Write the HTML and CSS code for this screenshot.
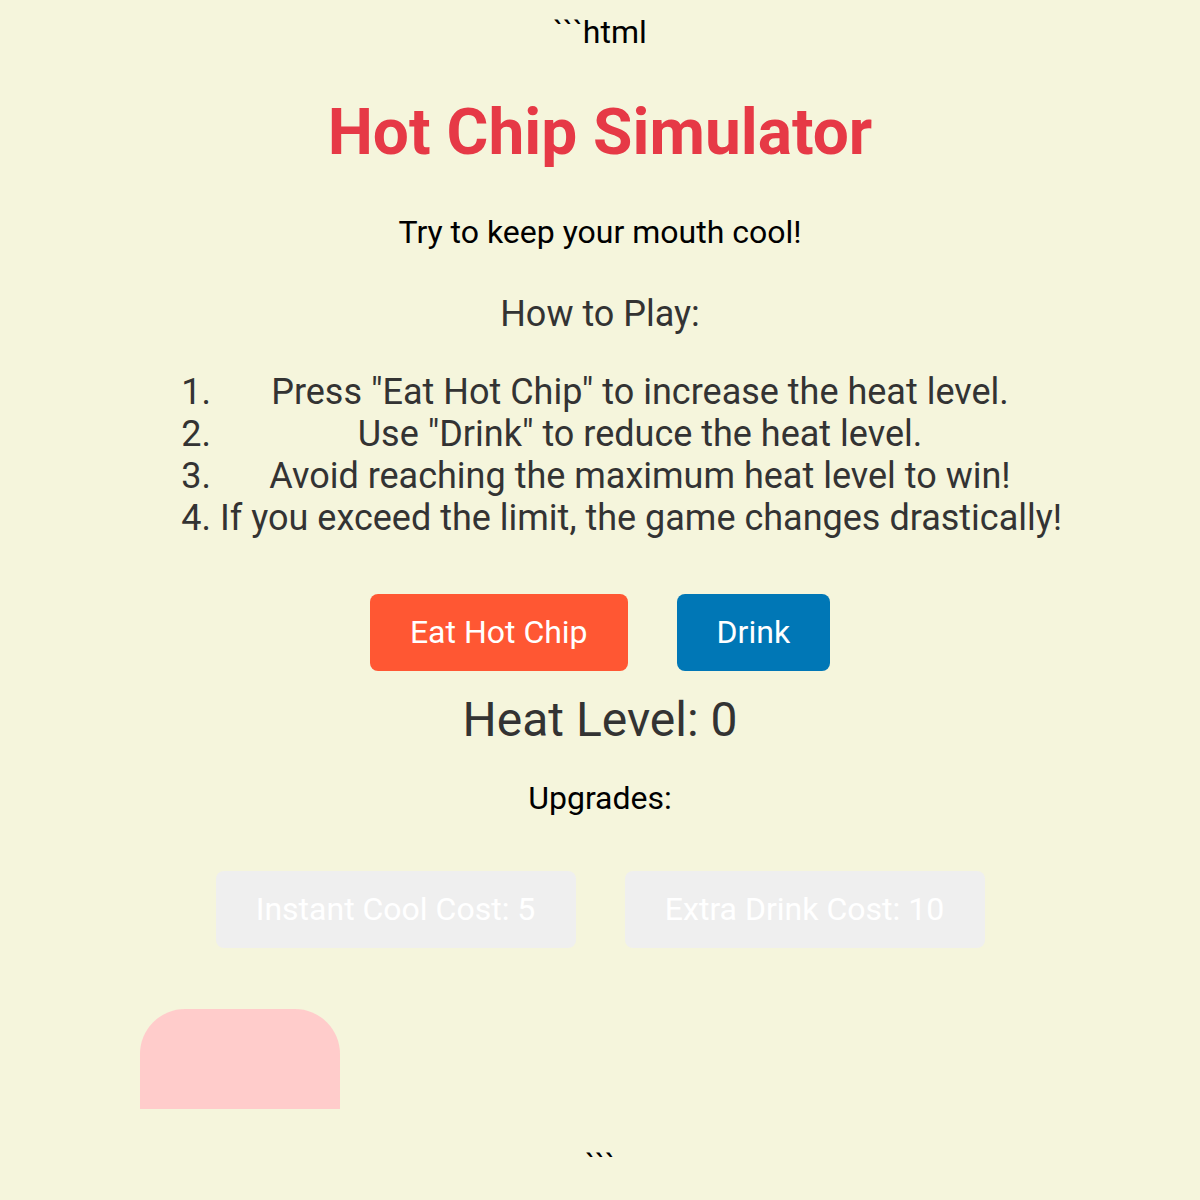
FILE: index.html
```html
<!DOCTYPE html>
<html>
<head>
<meta charset="utf-8">
<title>Hot Chip Simulator</title>
<link rel="stylesheet" href="styles.css">
</head>
<body>
<div class="fence fence-top">```html</div>
<main class="game">
  <h1 class="title">Hot Chip Simulator</h1>
  <p class="subtitle">Try to keep your mouth cool!</p>
  <h2 class="howto">How to Play:</h2>
  <ol class="rules">
    <li>Press "Eat Hot Chip" to increase the heat level.</li>
    <li>Use "Drink" to reduce the heat level.</li>
    <li>Avoid reaching the maximum heat level to win!</li>
    <li>If you exceed the limit, the game changes drastically!</li>
  </ol>
  <div class="actions">
    <button class="btn btn-eat">Eat Hot Chip</button>
    <button class="btn btn-drink">Drink</button>
  </div>
  <div class="heat">Heat Level: 0</div>
  <div class="upgrades-label">Upgrades:</div>
  <div class="upgrades">
    <button class="btn btn-upgrade" disabled>Instant Cool Cost: 5</button>
    <button class="btn btn-upgrade" disabled>Extra Drink Cost: 10</button>
  </div>
  <div class="mouth"></div>
</main>
<div class="fence fence-bottom">```</div>
</body>
</html>
```

FILE: styles.css
```css
html, body {
  margin: 0;
  padding: 0;
}

body {
  background: #f5f5dc;
  font-family: Roboto, "Liberation Sans", sans-serif;
  color: #000;
  text-align: center;
}

.fence {
  font-size: 32px;
  line-height: 37px;
  color: #000;
}

.fence-top {
  padding-top: 14px;
}

.fence-bottom {
  margin-top: 38px;
  padding-bottom: 20px;
}

.game {
  width: 920px;
  margin: 0 auto;
  display: flex;
  flex-direction: column;
  align-items: center;
}

.title {
  margin: 44px 0 0;
  font-size: 64px;
  line-height: 75px;
  font-weight: 700;
  color: #e63946;
}

.subtitle {
  margin: 44px 0 0;
  font-size: 32px;
  line-height: 37px;
  color: #000;
}

.howto {
  margin: 42px 0 0;
  font-size: 36px;
  line-height: 42px;
  font-weight: 400;
  color: #333;
}

.rules {
  align-self: stretch;
  margin: 36px 0 0;
  padding: 0 0 0 80px;
  font-size: 36px;
  line-height: 42px;
  color: #333;
  text-align: center;
}

.rules li {
  white-space: nowrap;
}

.actions,
.upgrades {
  display: flex;
  justify-content: center;
  gap: 49px;
}

.actions {
  margin-top: 55px;
}

.btn {
  font-family: Roboto, "Liberation Sans", sans-serif;
  font-size: 32px;
  line-height: 37px;
  padding: 20px 40px;
  border: none;
  border-radius: 8px;
  color: #fff;
}

.btn-eat {
  background: #ff5733;
}

.btn-drink {
  background: #0077b6;
}

.heat {
  margin-top: 21px;
  font-size: 48px;
  line-height: 56px;
  color: #333;
}

.upgrades-label {
  margin-top: 32px;
  font-size: 32px;
  line-height: 37px;
  color: #000;
}

.upgrades {
  margin-top: 54px;
}

.btn-upgrade {
  background: #efefef;
  color: #fff;
  width: 360px;
  padding: 20px 0;
}

.mouth {
  align-self: flex-start;
  width: 200px;
  height: 100px;
  margin-top: 61px;
  background: #ffcccb;
  border-radius: 45px 45px 0 0;
}
```
